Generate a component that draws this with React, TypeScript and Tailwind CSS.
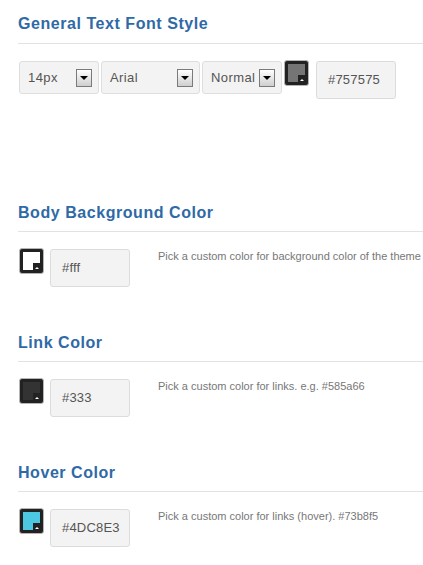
import React from 'react'

const FONT = "font-['Liberation_Sans',Arial,sans-serif]"

function Arrow() {
  return (
    <span className="flex h-[18px] w-[16px] shrink-0 items-center justify-center border border-[#7a7a7a] bg-gradient-to-b from-white to-[#cfcfcf]">
      <span className="h-0 w-0 border-x-[4px] border-t-[4px] border-x-transparent border-t-black" />
    </span>
  )
}

function Select({ label, width }: { label: string; width: string }) {
  return (
    <div
      className={`flex h-[33px] ${width} items-center justify-between rounded-[3px] border border-[#dedede] bg-[#f3f3f3] pl-[8px] pr-[6px] pt-px text-[13px] tracking-[0.4px] text-[#555]`}
    >
      <span>{label}</span>
      <Arrow />
    </div>
  )
}

function Swatch({ color }: { color: string }) {
  return (
    <div className="h-[26px] w-[25px] shrink-0 rounded-[3px] border border-[#b5b5b5] bg-[#222] p-[3px]">
      <div className="relative h-full w-full" style={{ backgroundColor: color }}>
        <div className="absolute bottom-0 right-0 flex h-[7px] w-[7px] items-end justify-center bg-[#222] pb-px">
          <span className="h-0 w-0 border-x-[2px] border-b-[2px] border-x-transparent border-b-white" />
        </div>
      </div>
    </div>
  )
}

function HexInput({ value }: { value: string }) {
  return (
    <div className="flex h-[38px] w-[80px] shrink-0 items-center rounded-[3px] border border-[#dcdcdc] bg-[#f3f3f3] pl-[11px] text-[13px] tracking-[0.2px] text-[#555]">
      {value}
    </div>
  )
}

function Title({ children, first }: { children: React.ReactNode; first?: boolean }) {
  return (
    <h2
      className={`border-b border-[#e2e2e2] ${first ? 'pb-[9px]' : 'pb-[8px]'} text-[16px] font-bold leading-[20px] tracking-[0.55px] text-[#2f6aa6]`}
    >
      {children}
    </h2>
  )
}

function ColorOption({ title, color, value, desc }: { title: string; color: string; value: string; desc: string }) {
  return (
    <section className="mt-[46px]">
      <Title>{title}</Title>
      <div className="mt-[16px] flex items-start pl-px">
        <Swatch color={color} />
        <div className="ml-[6px] mt-px">
          <HexInput value={value} />
        </div>
        <p className="ml-[28px] whitespace-nowrap text-[11px] leading-[16px] text-[#777]">{desc}</p>
      </div>
    </section>
  )
}

export default function App() {
  return (
    <div className={`h-[565px] w-[423px] overflow-hidden bg-white pl-[18px] pt-[14px] ${FONT}`}>
      <section>
        <Title first>General Text Font Style</Title>
        <div className="mt-[17px] flex items-start gap-[2px] pl-px">
          <Select label="14px" width="w-[80px]" />
          <Select label="Arial" width="w-[99px]" />
          <Select label="Normal" width="w-[80px]" />
          <div className="-mt-px">
            <Swatch color="#757575" />
          </div>
          <div className="ml-[5px]">
            <HexInput value="#757575" />
          </div>
        </div>
      </section>

      <div className="h-[58px]" />

      <ColorOption
        title="Body Background Color"
        color="#ffffff"
        value="#fff"
        desc="Pick a custom color for background color of the theme e.g. #ffffff"
      />
      <ColorOption
        title="Link Color"
        color="#333333"
        value="#333"
        desc="Pick a custom color for links. e.g. #585a66"
      />
      <ColorOption
        title="Hover Color"
        color="#4DC8E3"
        value="#4DC8E3"
        desc="Pick a custom color for links (hover). #73b8f5"
      />
    </div>
  )
}
